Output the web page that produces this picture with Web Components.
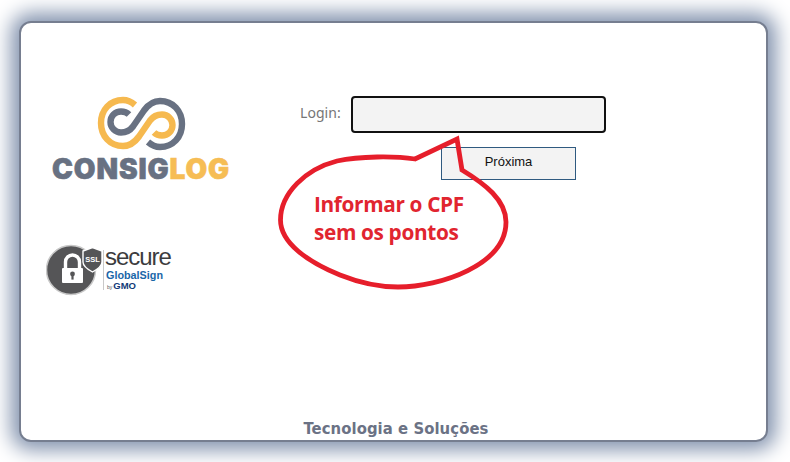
<!DOCTYPE html>
<html lang="pt"><head><meta charset="utf-8"><title>Consiglog</title>
<style>html,body{margin:0;height:100%;background:#fff}body{width:790px;height:462px;overflow:hidden}</style>
</head><body>
<login-card>
  <brand-column slot="brand"></brand-column>
  <login-form slot="form"></login-form>
  <span slot="foot">Tecnologia e Soluções</span>
</login-card>
<script>
function def(name, html){
  customElements.define(name, class extends HTMLElement{
    constructor(){super();this.attachShadow({mode:'open'}).innerHTML=html;}
  });
}
def('login-card',`<style>
:host{display:block;box-sizing:border-box;width:790px;height:462px;padding:21px 22px 20px 19px}
.card{box-sizing:border-box;height:100%;background:#fff;border:2px solid #767e90;border-radius:12px;box-shadow:0 0 20px 8px #8393ae;display:flex;flex-direction:column;position:relative}
.main{flex:1;display:flex;min-height:0}
.foot{text-align:center;font:bold 16.5px/18px "DejaVu Sans Condensed","DejaVu Sans",sans-serif;color:#6b7285;letter-spacing:.07px;height:20px;margin-left:5px}
</style><div class="card"><div class="main"><slot name="brand"></slot><slot name="form"></slot></div><div class="foot"><slot name="foot"></slot></div></div>`);

def('brand-column',`<style>
:host{display:flex;flex-direction:column;width:260px;flex:none;padding:69px 0 0 24px;box-sizing:border-box}
</style><consig-logo></consig-logo><ssl-seal></ssl-seal>`);

def('consig-logo',`<style>
:host{display:flex;flex-direction:column;width:190px;align-items:flex-start}
svg{display:block;margin-left:47px}
.w{font:900 28px/28px Inter,Roboto,sans-serif;letter-spacing:.9px;color:#687182;margin:3px 0 0 7px;-webkit-text-stroke:.6px currentColor;white-space:nowrap}
b{font-weight:900;color:#f6bd55}
</style>
<svg width="100" height="60" viewBox="0 0 100 60" fill="none" stroke-width="6.4">
<defs><path id="p" d="M43 13C39 9.500 34 8 31 8 18 8 9 18 9 31 9 44 18 54 31 54 38 54 43 50 47 44.500L58 28.500C61 24.500 65 22.500 70 22.500 76 22.500 80.500 27.500 80.500 33 80.500 39 76 43.500 70 43.500 66.500 43.500 64 42.500 62 40.500"/></defs>
<use href="#p" stroke="#f6b94f"/>
<use href="#p" stroke="#687182" transform="rotate(180 49.500 31.500)"/>
</svg>
<div class="w">CONSIG<b>LOG</b></div>`);

def('ssl-seal',`<style>
:host{display:flex;align-items:flex-start;margin-top:61px;margin-left:1px;height:52px}
svg{display:block;flex:none}
.t{display:flex;flex-direction:column;margin-left:0;color:#3c3c3e}
.s{font:400 24px/20px "Liberation Sans",sans-serif;letter-spacing:-1.05px;margin-top:3px}
.g{font:bold 10.8px/12px "Liberation Sans",sans-serif;color:#1a66a8;margin-top:2px;margin-left:1px}
.m{font:bold 9.5px/9px "Liberation Sans",sans-serif;color:#123a78;margin-left:2px}
.m i{font:5px "Liberation Sans",sans-serif;color:#555;margin-right:1px}
</style>
<svg width="59" height="52" viewBox="0 0 59 52">
<circle cx="25" cy="26" r="24.500" fill="#555557" stroke="#c8c8c8" stroke-width="1.500"/>
<path d="M19.500 24v-6a7 7 0 0 1 14 0v6" fill="none" stroke="#fff" stroke-width="3.400"/>
<rect x="16" y="24" width="21" height="15" rx="1" fill="#fff"/>
<circle cx="26.500" cy="30" r="2.400" fill="#555557"/><path d="M25.400 31h2.200v4.600h-2.200z" fill="#555557"/>
<path d="M37 7l9.500-3.500L56 7v11c0 4-4 7-9.500 10-5.500-3-9.500-6-9.500-10V7z" fill="#555557" stroke="#fff" stroke-width="1.400"/>
<text x="46.500" y="17.500" text-anchor="middle" font-family="Liberation Sans,sans-serif" font-weight="bold" font-size="7.500" fill="#fff">SSL</text>
<path d="M57.500 6v40" stroke="#bbb" stroke-width=".8"/>
</svg>
<div class="t"><span class="s">secure</span><span class="g">GlobalSign</span><span class="m"><i>by</i>GMO</span></div>`);

def('login-form',`<style>
:host{display:flex;flex-direction:column;flex:1;padding:73px 0 0 19px;position:relative;box-sizing:border-box}
.row{display:flex;align-items:center;height:37px}
label{font:14px/18px "Noto Sans","Open Sans",sans-serif;color:#767676;width:51px;flex:none;margin-top:-3px;letter-spacing:.05px}
.in{box-sizing:border-box;width:255px;height:37px;background:#f3f3f3;border:2px solid #111;border-radius:4px;padding:0 8px;outline:none;display:block}
.btn{box-sizing:border-box;display:block;width:135px;height:33px;margin:14px 0 0 141px;background:#f3f3f3;border:1px solid #2f5a80;border-radius:0;font:13px "Liberation Sans",sans-serif;color:#111;padding:0 0 5px 0}
</style>
<div class="row"><label for="i">Login:</label><input id="i" class="in" type="text"></div>
<button class="btn" type="button">Próxima</button>
<speech-bubble></speech-bubble>`);

def('speech-bubble',`<style>
:host{display:block;position:absolute;left:-281px;top:-23px;width:790px;height:462px;pointer-events:none}
svg{position:absolute;left:0;top:0}
.note{position:absolute;left:314px;top:190px;font:bold 20.8px/28px "Open Sans",sans-serif;color:#e1252f;white-space:nowrap;letter-spacing:-.35px}
</style>
<svg width="790" height="462" viewBox="0 0 790 462" fill="none">
<path stroke="#e61e2b" stroke-width="4.800" stroke-linejoin="miter" d="M415 159C395 156 360 156 337 161 306 169 280.500 193 280.500 220 280.500 243 308 262 340 275 360 283 378 287 398 287 440 287 506 265 506 222 506 200 485 184 462 170L457 139 415 159Z"/>
</svg>
<div class="note">Informar o CPF<br>sem os pontos</div>`);
</script>
</body></html>
